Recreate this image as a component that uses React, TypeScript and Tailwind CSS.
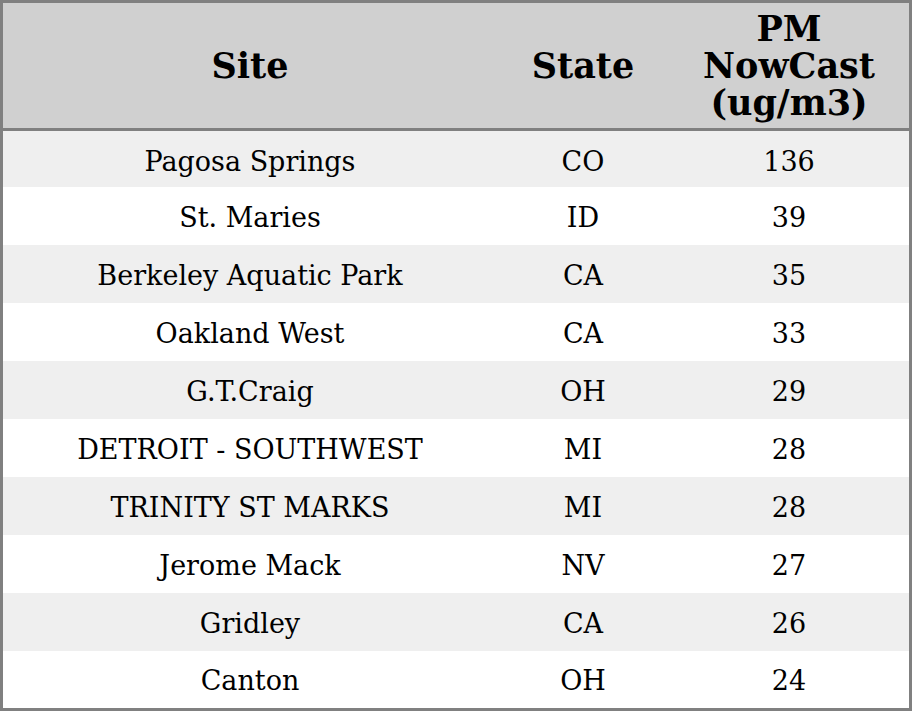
import React from "react";

const rows: [string, string, string][] = [
  ["Pagosa Springs", "CO", "136"],
  ["St. Maries", "ID", "39"],
  ["Berkeley Aquatic Park", "CA", "35"],
  ["Oakland West", "CA", "33"],
  ["G.T.Craig", "OH", "29"],
  ["DETROIT - SOUTHWEST", "MI", "28"],
  ["TRINITY ST MARKS", "MI", "28"],
  ["Jerome Mack", "NV", "27"],
  ["Gridley", "CA", "26"],
  ["Canton", "OH", "24"],
];

export default function App() {
  return (
    <div
      className="w-[912px] h-[711px] border-[3px] border-[#808080] flex flex-col bg-white text-black"
      style={{ fontFamily: '"DejaVu Serif", serif' }}
    >
      <div className="h-[125px] bg-[#d0d0d0] grid grid-cols-[494px_172px_240px] items-center border-b-[3px] border-[#808080] box-content font-bold text-[35px] leading-[37px]">
        <div className="text-center">Site</div>
        <div className="text-center">State</div>
        <div className="text-center">
          PM
          <br />
          NowCast
          <br />
          (ug/m3)
        </div>
      </div>
      <div className="flex-1 flex flex-col">
        {rows.map((r, i) => (
          <div
            key={i}
            className={`grid grid-cols-[494px_172px_240px] items-center text-[27px] leading-[32px] ${
              i === 0
                ? "h-[56px] pt-[5px]"
                : i === rows.length - 1
                ? "flex-1 pt-[2px]"
                : "h-[58px] pt-[4px]"
            } ${i % 2 === 0 ? "bg-[#efefef]" : "bg-white"}`}
          >
            <div className="text-center">{r[0]}</div>
            <div className="text-center">{r[1]}</div>
            <div className="text-center">{r[2]}</div>
          </div>
        ))}
      </div>
    </div>
  );
}
